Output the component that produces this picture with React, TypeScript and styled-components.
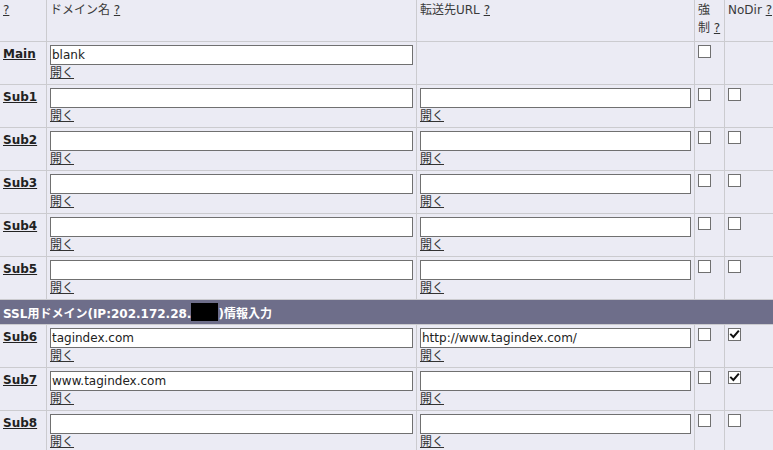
import React from "react";
import styled, { createGlobalStyle } from "styled-components";

const GlobalStyle = createGlobalStyle`
  html, body {
    margin: 0;
    padding: 0;
    background: #ffffff;
  }
  body {
    font-family: "DejaVu Sans", "Noto Sans CJK JP", sans-serif;
    font-size: 12px;
    color: #333;
    overflow: hidden;
  }
`;

type Entry = {
  name: string;
  domain: string;
  url?: string;
  force: boolean;
  noDir?: boolean;
};

const mainRows: Entry[] = [
  { name: "Main", domain: "blank", force: false },
  { name: "Sub1", domain: "", url: "", force: false, noDir: false },
  { name: "Sub2", domain: "", url: "", force: false, noDir: false },
  { name: "Sub3", domain: "", url: "", force: false, noDir: false },
  { name: "Sub4", domain: "", url: "", force: false, noDir: false },
  { name: "Sub5", domain: "", url: "", force: false, noDir: false },
];

const sslRows: Entry[] = [
  {
    name: "Sub6",
    domain: "tagindex.com",
    url: "http://www.tagindex.com/",
    force: false,
    noDir: true,
  },
  { name: "Sub7", domain: "www.tagindex.com", url: "", force: false, noDir: true },
  { name: "Sub8", domain: "", url: "", force: false, noDir: false },
];

export default function App() {
  return (
    <>
      <GlobalStyle />
      <Grid>
        <HeadCell>
          <Help href="#">?</Help>
        </HeadCell>
        <HeadCell>
          ドメイン名 <Help href="#">?</Help>
        </HeadCell>
        <HeadCell>
          転送先URL <Help href="#">?</Help>
        </HeadCell>
        <HeadCell>
          強<br />制 <Help href="#">?</Help>
        </HeadCell>
        <HeadCell $nowrap>
          NoDir <Help href="#">?</Help>
        </HeadCell>

        {mainRows.map((row) => (
          <DomainRow key={row.name} entry={row} />
        ))}

        <SslBar>
          SSL用ドメイン(IP:202.172.28.<Masked />)情報入力
        </SslBar>

        {sslRows.map((row) => (
          <DomainRow key={row.name} entry={row} />
        ))}
      </Grid>
    </>
  );
}

function DomainRow({ entry }: { entry: Entry }) {
  return (
    <>
      <Cell>
        <NameLink href="#">{entry.name}</NameLink>
      </Cell>
      <Cell>
        <Field type="text" defaultValue={entry.domain} />
        <OpenLink href="#">開く</OpenLink>
      </Cell>
      <Cell>
        {entry.url !== undefined && (
          <>
            <Field type="text" defaultValue={entry.url} />
            <OpenLink href="#">開く</OpenLink>
          </>
        )}
      </Cell>
      <Cell>
        <Check checked={entry.force} />
      </Cell>
      <Cell>{entry.noDir !== undefined && <Check checked={entry.noDir} />}</Cell>
    </>
  );
}

function Check({ checked }: { checked: boolean }) {
  return (
    <CheckBox role="checkbox" aria-checked={checked}>
      {checked && (
        <svg width="11" height="11" viewBox="0 0 11 11">
          <path
            d="M2 5.6 L4.4 8 L9.2 2.4"
            fill="none"
            stroke="#111"
            strokeWidth="2"
            strokeLinecap="square"
          />
        </svg>
      )}
    </CheckBox>
  );
}

const Grid = styled.div`
  display: grid;
  width: 773px;
  grid-template-columns: 46px 369px 277px 29px 48px;
  grid-template-rows: 41px repeat(6, 42px) 24px repeat(3, 42px);
  gap: 1px;
  background: #cbcbcf;
`;

const HeadCell = styled.div<{ $nowrap?: boolean }>`
  background: #ebebf4;
  padding: 1px 3px 0;
  line-height: 18px;
  color: #3a3a3a;
  white-space: ${({ $nowrap }) => ($nowrap ? "nowrap" : "normal")};
`;

const Help = styled.a`
  color: #333;
  text-decoration: underline;
`;

const Cell = styled.div`
  background: #ebebf4;
  padding: 3px;
  min-width: 0;
`;

const NameLink = styled.a`
  display: inline-block;
  margin-top: 1px;
  font-weight: bold;
  line-height: 16px;
  color: #222;
  text-decoration: underline;
`;

const Field = styled.input`
  display: block;
  box-sizing: border-box;
  width: 100%;
  height: 20px;
  margin: 0;
  padding: 0 1px;
  border: 1px solid #707070;
  border-radius: 0;
  background: #fff;
  font-family: "DejaVu Sans", "Noto Sans CJK JP", sans-serif;
  font-size: 12px;
  color: #222;
  outline: none;
`;

const OpenLink = styled.a`
  display: inline-block;
  margin-top: 1px;
  line-height: 14px;
  font-size: 12px;
  color: #333;
  text-decoration: underline;
`;

const CheckBox = styled.span`
  display: flex;
  align-items: center;
  justify-content: center;
  box-sizing: border-box;
  width: 13px;
  height: 13px;
  border: 1px solid #707070;
  background: #fff;
`;

const SslBar = styled.div`
  grid-column: 1 / -1;
  display: flex;
  align-items: center;
  padding: 0 3px;
  background: #6e6e8a;
  color: #fff;
  font-weight: bold;
  font-size: 12px;
  white-space: nowrap;
`;

const Masked = styled.span`
  display: inline-block;
  width: 27px;
  height: 18px;
  background: #000;
`;
